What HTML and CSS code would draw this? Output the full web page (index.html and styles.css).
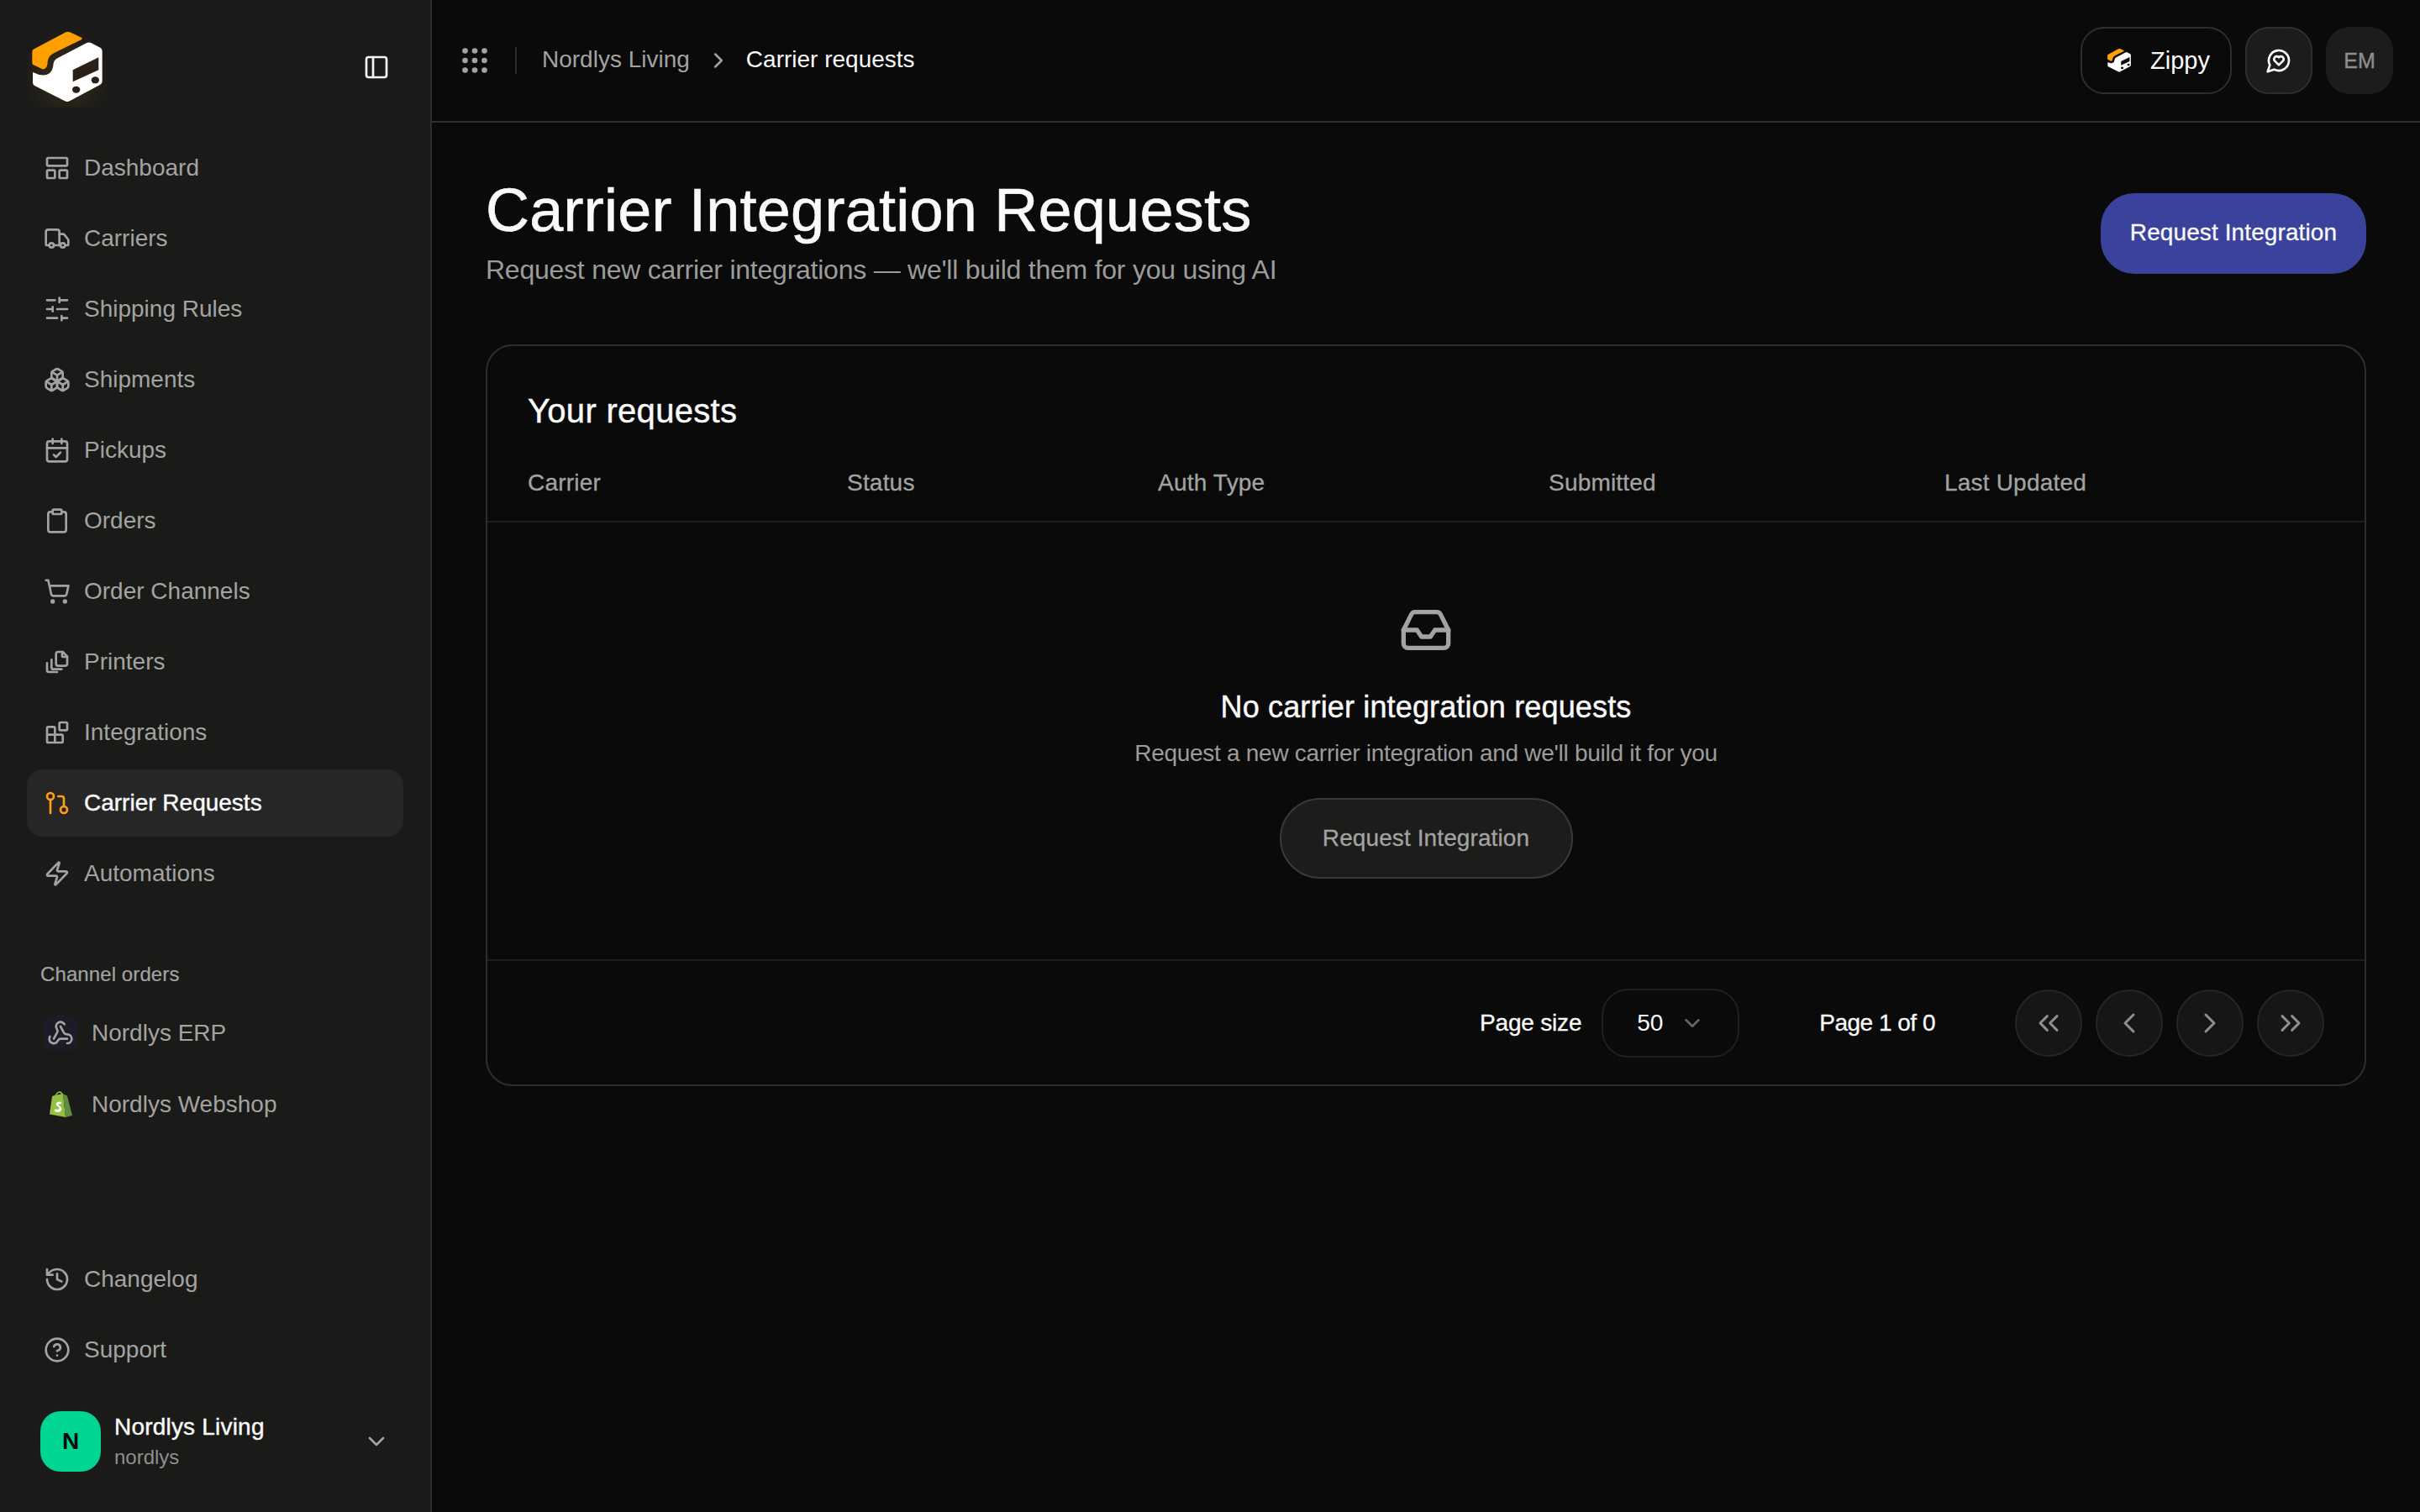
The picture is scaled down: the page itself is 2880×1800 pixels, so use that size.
FILE: index.html
```html
<!DOCTYPE html>
<html lang="en">
<head>
    <meta charset="UTF-8">
    <title>Carrier requests</title>
    <link rel="stylesheet" href="styles.css">
</head>
<body>
<div class="app">
    <aside class="sidebar">
        <div class="side-head">
            <svg class="logo" viewBox="36 36 288 288">
                <path class="logo-orange" d="M55 125Q55 118 62 115L175 55Q182 52 190 55L232 75Q235 78 230 82L135 128Q112 138 110 160Q110 180 100 185Q95 188 88 185L60 172Q55 170 55 165Z"/>
                <path class="logo-white" d="M57 198L80 207Q125 215 130 175Q130 155 145 148L250 93Q258 90 265 93L298 110Q305 115 305 122L305 230Q305 238 298 242L190 300Q180 306 170 300L62 245Q57 242 57 235Z"/>
                <path class="logo-dark" d="M200 190L292 145L292 190L200 232Z"/>
                <ellipse class="logo-dark" cx="212" cy="260" rx="14" ry="12"/>
                <ellipse class="logo-dark" cx="280" cy="226" rx="14" ry="12"/>
            </svg>
            <svg class="icon toggle" viewBox="0 0 24 24"><rect width="18" height="18" x="3" y="3" rx="2"/><path d="M9 3v18"/></svg>
        </div>

        <nav class="nav">
            <a class="nav-item"><svg class="icon" viewBox="0 0 24 24"><rect width="18" height="7" x="3" y="3" rx="1"/><rect width="7" height="7" x="3" y="14" rx="1"/><rect width="7" height="7" x="14" y="14" rx="1"/></svg>Dashboard</a>
            <a class="nav-item"><svg class="icon" viewBox="0 0 24 24"><path d="M14 18V6a2 2 0 0 0-2-2H4a2 2 0 0 0-2 2v11a1 1 0 0 0 1 1h2"/><path d="M15 18H9"/><path d="M19 18h2a1 1 0 0 0 1-1v-3.65a1 1 0 0 0-.22-.624l-3.48-4.35A1 1 0 0 0 17.52 8H14"/><circle cx="17" cy="18" r="2"/><circle cx="7" cy="18" r="2"/></svg>Carriers</a>
            <a class="nav-item"><svg class="icon" viewBox="0 0 24 24"><path d="M21 4h-7M10 4H3M21 12h-9M8 12H3M21 20h-5M12 20H3M14 2v4M8 10v4M16 18v4"/></svg>Shipping Rules</a>
            <a class="nav-item"><svg class="icon" viewBox="0 0 24 24"><path d="M2.97 12.92A2 2 0 0 0 2 14.63v3.24a2 2 0 0 0 .97 1.71l3 1.8a2 2 0 0 0 2.06 0L12 19v-5.5l-5-3-4.03 2.42Z"/><path d="m7 16.5-4.74-2.85"/><path d="m7 16.5 5-3"/><path d="M7 16.5v5.17"/><path d="M12 13.5V19l3.97 2.38a2 2 0 0 0 2.06 0l3-1.8a2 2 0 0 0 .97-1.71v-3.24a2 2 0 0 0-.97-1.71L17 10.5l-5 3Z"/><path d="m17 16.5-5-3"/><path d="m17 16.5 4.74-2.85"/><path d="M17 16.5v5.17"/><path d="M7.97 4.42A2 2 0 0 0 7 6.13v4.37l5 3 5-3V6.13a2 2 0 0 0-.97-1.71l-3-1.8a2 2 0 0 0-2.06 0l-3 1.8Z"/><path d="M12 8 7.26 5.15"/><path d="m12 8 4.74-2.85"/><path d="M12 13.5V8"/></svg>Shipments</a>
            <a class="nav-item"><svg class="icon" viewBox="0 0 24 24"><path d="M8 2v4M16 2v4"/><rect width="18" height="18" x="3" y="4" rx="2"/><path d="M3 10h18"/><path d="m9 16 2 2 4-4"/></svg>Pickups</a>
            <a class="nav-item"><svg class="icon" viewBox="0 0 24 24"><rect width="8" height="4" x="8" y="2" rx="1"/><path d="M16 4h2a2 2 0 0 1 2 2v14a2 2 0 0 1-2 2H6a2 2 0 0 1-2-2V6a2 2 0 0 1 2-2h2"/></svg>Orders</a>
            <a class="nav-item"><svg class="icon" viewBox="0 0 24 24"><circle cx="8" cy="21" r="1"/><circle cx="19" cy="21" r="1"/><path d="M2.05 2.05h2l2.66 12.42a2 2 0 0 0 2 1.58h9.78a2 2 0 0 0 1.95-1.57l1.65-7.43H5.12"/></svg>Order Channels</a>
            <a class="nav-item"><svg class="icon" viewBox="0 0 24 24"><path d="M13 15.5a2 2 0 0 1-2-2V5a2 2 0 0 1 2-2h4l4 4v6.500a2 2 0 0 1-2 2z"/><path d="M16.500 3v3.500a1 1 0 0 0 1 1H21"/><path d="M7 10v7a1.500 1.500 0 0 0 1.500 1.500H16"/><path d="M3 13v6.500a1.500 1.500 0 0 0 1.500 1.500H12"/></svg>Printers</a>
            <a class="nav-item"><svg class="icon" viewBox="0 0 24 24"><rect width="7" height="7" x="14" y="3" rx="1"/><path d="M10 21V8a1 1 0 0 0-1-1H4a1 1 0 0 0-1 1v12a1 1 0 0 0 1 1h12a1 1 0 0 0 1-1v-5a1 1 0 0 0-1-1H3"/></svg>Integrations</a>
            <a class="nav-item active"><svg class="icon" viewBox="0 0 24 24"><circle cx="18" cy="18" r="3"/><circle cx="6" cy="6" r="3"/><path d="M13 6h3a2 2 0 0 1 2 2v7"/><path d="M6 9v12"/></svg>Carrier Requests</a>
            <a class="nav-item"><svg class="icon" viewBox="0 0 24 24"><path d="M4 14a1 1 0 0 1-.78-1.63l9.9-10.2a.5.5 0 0 1 .86.46l-1.92 6.02A1 1 0 0 0 13 10h7a1 1 0 0 1 .78 1.63l-9.9 10.2a.5.5 0 0 1-.86-.46l1.92-6.02A1 1 0 0 0 11 14z"/></svg>Automations</a>
        </nav>

        <div class="channels">
            <div class="channels-label">Channel orders</div>
            <a class="channel-item">
                <span class="channel-icon erp"><svg class="icon" viewBox="0 0 24 24"><path d="M18 16.98h-5.99c-1.1 0-1.95.94-2.48 1.9A4 4 0 0 1 2 17c.01-.7.2-1.4.57-2"/><path d="m6 17 3.13-5.78c.53-.97.1-2.18-.5-3.1a4 4 0 1 1 6.89-4.06"/><path d="m12 6 3.13 5.73C15.66 12.7 16.9 13 18 13a4 4 0 0 1 0 8"/></svg></span>
                Nordlys ERP
            </a>
            <a class="channel-item">
                <span class="channel-icon">
                    <svg class="shopify" viewBox="0 0 28 32">
                        <path class="bag-light" d="M1 27.500L4 6.500Q4.500 5.500 6 5.200L17 3L20 31L1 27.500Z"/>
                        <path class="bag-dark" d="M17 3L19.500 4.500L22 5.500L28 29L20 31Z"/>
                        <path class="bag-handle" d="M7.500 8Q9 1 13 1Q15.500 1 16 4.500"/>
                        <path class="bag-s" d="M15 13Q11 11.500 9 14Q8 17 11.500 18.500Q13.500 20 12 21.500Q9.500 22.500 7.500 21L7 24Q11 26 14 24Q17 21 13.500 18Q11 16.500 12 15.500Q13 14.500 14.500 15.500Z"/>
                    </svg>
                </span>
                Nordlys Webshop
            </a>
        </div>

        <div class="side-foot">
            <a class="nav-item"><svg class="icon" viewBox="0 0 24 24"><path d="M3 12a9 9 0 1 0 9-9 9.750 9.750 0 0 0-6.740 2.740L3 8"/><path d="M3 3v5h5"/><path d="M12 7v5l4 2"/></svg>Changelog</a>
            <a class="nav-item"><svg class="icon" viewBox="0 0 24 24"><circle cx="12" cy="12" r="10"/><path d="M9.090 9a3 3 0 0 1 5.830 1c0 2-3 3-3 3"/><path d="M12 17h.01"/></svg>Support</a>
            <div class="workspace">
                <div class="avatar">N</div>
                <div class="workspace-text">
                    <div class="workspace-name">Nordlys Living</div>
                    <div class="workspace-slug">nordlys</div>
                </div>
                <svg class="icon workspace-chevron" viewBox="0 0 24 24"><path d="m6 9 6 6 6-6"/></svg>
            </div>
        </div>
    </aside>

    <main class="main">
        <header class="topbar">
            <svg class="grip" viewBox="0 0 36 36">
                <circle cx="6.500" cy="6.500" r="3.300"/><circle cx="18" cy="6.500" r="3.300"/><circle cx="29.500" cy="6.500" r="3.300"/>
                <circle cx="6.500" cy="18" r="3.300"/><circle cx="18" cy="18" r="3.300"/><circle cx="29.500" cy="18" r="3.300"/>
                <circle cx="6.500" cy="29.500" r="3.300"/><circle cx="18" cy="29.500" r="3.300"/><circle cx="29.500" cy="29.500" r="3.300"/>
            </svg>
            <span class="top-divider"></span>
            <span class="crumb">Nordlys Living</span>
            <svg class="icon crumb-sep" viewBox="0 0 24 24"><path d="m9 18 6-6-6-6"/></svg>
            <span class="crumb current">Carrier requests</span>
            <div class="top-actions">
                <button class="zippy">
                    <svg class="zippy-logo" viewBox="36 36 288 288">
                        <path class="logo-orange" d="M55 125Q55 118 62 115L175 55Q182 52 190 55L232 75Q235 78 230 82L135 128Q112 138 110 160Q110 180 100 185Q95 188 88 185L60 172Q55 170 55 165Z"/>
                        <path class="logo-white" d="M57 198L80 207Q125 215 130 175Q130 155 145 148L250 93Q258 90 265 93L298 110Q305 115 305 122L305 230Q305 238 298 242L190 300Q180 306 170 300L62 245Q57 242 57 235Z"/>
                        <path class="logo-black" d="M200 190L292 145L292 190L200 232Z"/>
                        <ellipse class="logo-black" cx="212" cy="260" rx="14" ry="12"/>
                        <ellipse class="logo-black" cx="280" cy="226" rx="14" ry="12"/>
                    </svg>
                    Zippy
                </button>
                <button class="square-btn">
                    <svg class="icon" viewBox="0 0 24 24"><path d="M7.900 20A9 9 0 1 0 4 16.100L2 22Z"/><path d="M12 16l-3.600-3.500a2.400 2.400 0 0 1 3.400-3.400l.2.200.2-.2a2.400 2.400 0 0 1 3.400 3.400z"/></svg>
                </button>
                <div class="user-badge">EM</div>
            </div>
        </header>

        <section class="content">
            <div class="page-head">
                <div>
                    <h1>Carrier Integration Requests</h1>
                    <p class="page-sub">Request new carrier integrations — we'll build them for you using AI</p>
                </div>
                <button class="primary-btn">Request Integration</button>
            </div>

            <div class="card">
                <h2>Your requests</h2>
                <div class="table-head">
                    <div>Carrier</div>
                    <div>Status</div>
                    <div>Auth Type</div>
                    <div>Submitted</div>
                    <div>Last Updated</div>
                </div>
                <div class="empty">
                    <svg class="icon empty-icon" viewBox="0 0 24 24"><path d="M22 12h-6l-2 3h-4l-2-3H2"/><path d="M5.450 5.110 2 12v6a2 2 0 0 0 2 2h16a2 2 0 0 0 2-2v-6l-3.450-6.890A2 2 0 0 0 16.760 4H7.240a2 2 0 0 0-1.790 1.110z"/></svg>
                    <h3>No carrier integration requests</h3>
                    <p>Request a new carrier integration and we'll build it for you</p>
                    <button class="ghost-btn">Request Integration</button>
                </div>
                <div class="pager">
                    <span class="pager-label">Page size</span>
                    <div class="page-select">
                        <span>50</span>
                        <svg class="icon" viewBox="0 0 24 24"><path d="m6 9 6 6 6-6"/></svg>
                    </div>
                    <span class="pager-count">Page 1 of 0</span>
                    <div class="pager-btns">
                        <button class="round-btn"><svg class="icon" viewBox="0 0 24 24"><path d="m11 17-5-5 5-5"/><path d="m18 17-5-5 5-5"/></svg></button>
                        <button class="round-btn"><svg class="icon" viewBox="0 0 24 24"><path d="m15 18-6-6 6-6"/></svg></button>
                        <button class="round-btn"><svg class="icon" viewBox="0 0 24 24"><path d="m9 18 6-6-6-6"/></svg></button>
                        <button class="round-btn"><svg class="icon" viewBox="0 0 24 24"><path d="m6 17 5-5-5-5"/><path d="m13 17 5-5-5-5"/></svg></button>
                    </div>
                </div>
            </div>
        </section>
    </main>
</div>
</body>
</html>
```

FILE: styles.css
```css
* {
    box-sizing: border-box;
}
body {
    margin: 0;
    background: #0a0a0a;
    color: #fafafa;
    font-family: "Liberation Sans", Arial, sans-serif;
    font-size: 28px;
}
h1, h2, h3, p {
    margin: 0;
}
button {
    font-family: inherit;
    cursor: pointer;
}
.app {
    display: flex;
    height: 1800px;
    overflow: hidden;
}
.icon {
    width: 32px;
    height: 32px;
    flex: none;
    fill: none;
    stroke: currentColor;
    stroke-width: 2;
    stroke-linecap: round;
    stroke-linejoin: round;
}

/* sidebar */
.sidebar {
    width: 514px;
    flex: none;
    display: flex;
    flex-direction: column;
    padding: 0 32px 48px;
    background: #1a1a18;
    border-right: 2px solid #2e2e2c;
    color: #a3a3a1;
}
.side-head {
    height: 160px;
    display: flex;
    align-items: center;
    justify-content: space-between;
    padding-right: 16px;
}
.logo {
    width: 96px;
    height: 96px;
    background: radial-gradient(circle at 50% 60%, rgba(255, 160, 0, 0.16), rgba(255, 160, 0, 0) 72%);
}
.logo-orange {
    fill: #ffa000;
}
.logo-white {
    fill: #fff;
}
.logo-dark {
    fill: #2a2016;
}
.logo-black {
    fill: #0a0a0a;
}
.toggle {
    color: #f5f5f5;
}
.nav {
    display: flex;
    flex-direction: column;
    gap: 4px;
}
.nav-item {
    height: 80px;
    display: flex;
    align-items: center;
    gap: 16px;
    padding-left: 20px;
    border-radius: 18px;
    white-space: nowrap;
}
.nav-item.active {
    background: #262626;
    color: #fafafa;
    -webkit-text-stroke: 0.4px #fafafa;
}
.nav-item.active .icon {
    color: #ff9f1c;
}
.channels {
    margin-top: 60px;
    display: flex;
    flex-direction: column;
    gap: 5px;
}
.channels-label {
    height: 40px;
    line-height: 40px;
    margin-bottom: 5px;
    padding-left: 16px;
    font-size: 24px;
    letter-spacing: 0.1px;
    -webkit-text-stroke: 0.2px #a3a3a1;
}
.channel-item {
    height: 80px;
    display: flex;
    align-items: center;
    gap: 17px;
    padding-left: 20px;
}
.channel-icon {
    width: 40px;
    height: 40px;
    flex: none;
    display: flex;
    align-items: center;
    justify-content: center;
    border-radius: 8px;
}
.channel-icon.erp {
    background: #1c1c28;
}
.shopify {
    width: 28px;
    height: 32px;
}
.bag-light {
    fill: #95bf47;
}
.bag-dark {
    fill: #5e8e3e;
}
.bag-handle {
    fill: none;
    stroke: #95bf47;
    stroke-width: 1.500;
}
.bag-s {
    fill: #fff;
}
.side-foot {
    margin-top: auto;
    display: flex;
    flex-direction: column;
    gap: 4px;
}
.workspace {
    display: flex;
    align-items: center;
    padding: 0 4px 0 16px;
    margin-top: 29px;
    height: 72px;
}
.avatar {
    width: 72px;
    height: 72px;
    flex: none;
    border-radius: 24px;
    background: #00d492;
    color: #0a0a0a;
    font-size: 28px;
    font-weight: 700;
    text-align: center;
    line-height: 72px;
}
.workspace-text {
    margin-left: 16px;
    flex: 1;
}
.workspace-name {
    color: #fafafa;
    line-height: 38px;
    letter-spacing: 0.2px;
    -webkit-text-stroke: 0.4px #fafafa;
}
.workspace-slug {
    font-size: 24px;
    line-height: 34px;
    color: #8f8f8d;
}
.workspace-chevron {
    margin-right: 12px;
}

/* top bar */
.main {
    flex: 1;
    min-width: 0;
}
.topbar {
    height: 146px;
    display: flex;
    align-items: center;
    padding: 0 32px 0 33px;
    border-bottom: 2px solid #2e2e2c;
}
.grip {
    width: 36px;
    height: 36px;
    fill: #a3a3a1;
}
.top-divider {
    width: 2px;
    height: 32px;
    margin: 0 30px 0 30px;
    background: #2e2e2c;
}
.crumb {
    margin-top: -3px;
    color: #a3a3a1;
}
.crumb.current {
    color: #fafafa;
}
.crumb-sep {
    width: 30px;
    height: 30px;
    margin: 0 18px 0 19px;
    color: #a3a3a1;
}
.top-actions {
    margin-left: auto;
    display: flex;
    align-items: center;
    gap: 16px;
}
.zippy {
    height: 80px;
    width: 180px;
    display: flex;
    align-items: center;
    gap: 21px;
    padding: 0 0 0 28px;
    background: #0a0a0a;
    border: 2px solid #2e2e2c;
    border-radius: 28px;
    color: #fafafa;
    font-size: 29px;
}
.zippy-logo {
    width: 32px;
    height: 32px;
    flex: none;
}
.square-btn {
    width: 80px;
    height: 80px;
    display: flex;
    align-items: center;
    justify-content: center;
    padding: 0;
    background: #1c1c1c;
    border: 2px solid #2e2e2c;
    border-radius: 28px;
    color: #fafafa;
}
.user-badge {
    width: 80px;
    height: 80px;
    background: #1c1c1c;
    border-radius: 28px;
    color: #8f8f8d;
    font-size: 25px;
    -webkit-text-stroke: 0.4px #8f8f8d;
    text-align: center;
    line-height: 80px;
}

/* page */
.content {
    padding: 64px 64px 0;
}
.page-head {
    display: flex;
    align-items: flex-start;
    justify-content: space-between;
    margin-bottom: 61px;
}
h1 {
    font-size: 72px;
    font-weight: 400;
    line-height: 80px;
    letter-spacing: 0.25px;
    -webkit-text-stroke: 0.6px #fafafa;
}
.page-sub {
    margin-top: 3px;
    font-size: 32px;
    line-height: 56px;
    letter-spacing: -0.24px;
    color: #9c9c9a;
}
.primary-btn {
    width: 316px;
    height: 96px;
    margin-top: 20px;
    padding: 0 0 2px;
    background: #3b429c;
    border: 0;
    border-radius: 40px;
    color: #fafafa;
    font-size: 28px;
    letter-spacing: 0.1px;
    -webkit-text-stroke: 0.3px #fafafa;
}
.card {
    border: 2px solid #2e2e2c;
    border-radius: 32px;
}
h2 {
    padding: 53px 48px 0;
    font-size: 40px;
    font-weight: 400;
    line-height: 48px;
    letter-spacing: 0.3px;
    -webkit-text-stroke: 0.4px #fafafa;
}
.table-head {
    display: grid;
    grid-template-columns: 380px 370px 465px 471px 1fr;
    height: 109px;
    align-items: center;
    padding: 16px 48px 0;
    border-bottom: 2px solid #1e1e1d;
    color: #a3a3a1;
    letter-spacing: 0.2px;
    -webkit-text-stroke: 0.3px #a3a3a1;
}
.empty {
    height: 522px;
    display: flex;
    flex-direction: column;
    align-items: center;
    padding-top: 96px;
    border-bottom: 2px solid #1e1e1d;
}
.empty-icon {
    width: 64px;
    height: 64px;
    color: #a3a3a1;
}
.empty h3 {
    margin-top: 36px;
    font-size: 36px;
    font-weight: 400;
    line-height: 48px;
    letter-spacing: 0.15px;
    -webkit-text-stroke: 0.4px #fafafa;
}
.empty p {
    margin-top: 11px;
    line-height: 40px;
    letter-spacing: -0.28px;
    color: #9c9c9a;
}
.ghost-btn {
    width: 349px;
    height: 96px;
    margin-top: 33px;
    padding: 0;
    background: #1c1c1b;
    border: 2px solid #3a3a38;
    border-radius: 48px;
    color: #a3a3a1;
    font-size: 28px;
    letter-spacing: 0.1px;
    -webkit-text-stroke: 0.3px #a3a3a1;
}
.pager {
    height: 147px;
    display: flex;
    align-items: center;
    justify-content: flex-end;
    padding-right: 48px;
}
.pager-label,
.pager-count {
    -webkit-text-stroke: 0.3px #fafafa;
}
.pager-label {
    letter-spacing: -0.2px;
}
.pager-count {
    letter-spacing: -0.5px;
}
.page-select {
    width: 164px;
    height: 82px;
    display: flex;
    align-items: center;
    gap: 20px;
    margin: 0 95px 0 24px;
    padding-left: 40px;
    border: 2px solid #1f1f1e;
    border-radius: 32px;
}
.page-select .icon {
    width: 30px;
    height: 30px;
    color: #666;
}
.pager-btns {
    display: flex;
    gap: 16px;
    margin-left: 95px;
}
.round-btn {
    width: 80px;
    height: 80px;
    display: flex;
    align-items: center;
    justify-content: center;
    padding: 0;
    background: #161616;
    border: 2px solid #262626;
    border-radius: 50%;
    color: #8f8f8d;
}
.round-btn .icon {
    width: 40px;
    height: 40px;
    stroke-width: 1.800;
}
```
